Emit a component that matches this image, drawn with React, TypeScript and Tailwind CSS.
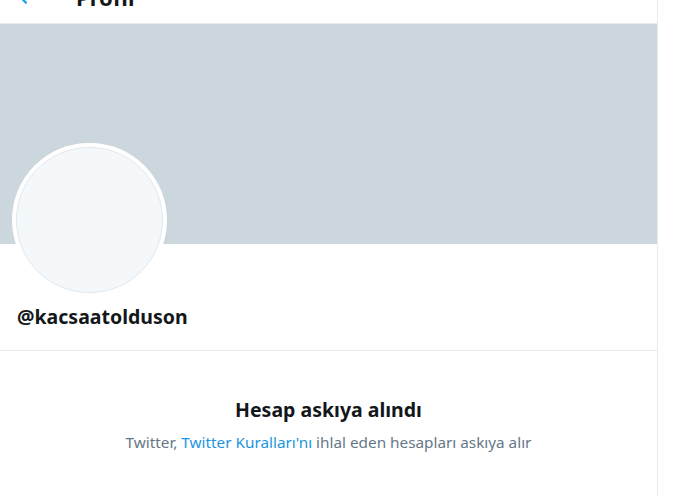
import { FaArrowLeft } from "react-icons/fa6";

const font = { fontFamily: '"Noto Sans", "Open Sans", Arial, sans-serif' };

export default function App() {
  return (
    <div className="flex h-[496px] w-[687px] overflow-hidden bg-white" style={font}>
      <div className="flex w-[658px] flex-col border-r border-[#e6ecf0]">
        {/* Header (scrolled partly off-screen) */}
        <div className="-mt-[29px] flex h-[53px] shrink-0 items-center border-b border-[#e6ecf0] px-[18px]">
          <FaArrowLeft className="text-[#1da1f2]" size={18} />
          <span className="ml-[40px] text-[22px] font-bold text-[#14171a]">Profil</span>
        </div>

        {/* Banner */}
        <div className="h-[220px] shrink-0 bg-[#ccd6dd]" />

        {/* Profile info */}
        <div className="border-b border-[#e6ecf0] px-[12px] pb-[19px]">
          <div className="-mt-[101px] h-[154px] w-[155px] rounded-full bg-white p-[4px]">
            <div className="h-full w-full rounded-full border border-[#e1e8ed] bg-[#f5f8fa]" />
          </div>
          <div className="mt-[6px] pl-[5px] text-[19.5px] font-bold leading-[28px] text-[#14171a]">
            @kacsaatolduson
          </div>
        </div>

        {/* Suspended notice */}
        <div className="flex flex-col items-center pt-[45px]">
          <div className="text-[19.5px] font-bold leading-[28px] text-[#14171a]">Hesap askıya alındı</div>
          <div className="mt-[8px] text-[15.3px] leading-[20px] text-[#657786]">
            Twitter, <span className="text-[#1b95e0]">Twitter Kuralları'nı</span> ihlal eden hesapları askıya alır
          </div>
        </div>
      </div>
      <div className="flex-1 bg-white" />
    </div>
  );
}
